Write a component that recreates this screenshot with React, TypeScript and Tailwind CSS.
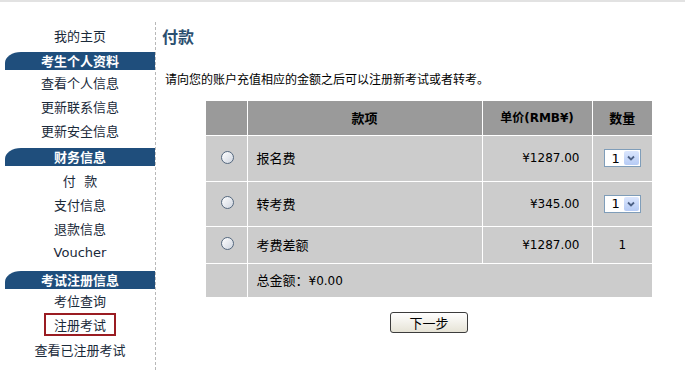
import React from "react";

const cjk = { fontFamily: '"Noto Sans CJK SC", "Noto Sans", sans-serif' };
const num = { fontFamily: '"DejaVu Sans", "Noto Sans CJK SC", sans-serif' };

function Item({ children, h = "h-[24px]", latin = false }: { children: React.ReactNode; h?: string; latin?: boolean }) {
  return (
    <div className={`${h} flex items-center justify-center text-[13px] text-[#1a2a3a]`} style={latin ? num : undefined}>
      {children}
    </div>
  );
}

function Header({ children, mt }: { children: React.ReactNode; mt: string }) {
  return (
    <div className={`${mt} h-[18px] bg-[#1f4e7c] rounded-tl-[16px_11px] flex items-center justify-center text-white font-bold text-[13px]`}>
      {children}
    </div>
  );
}

function Radio() {
  return (
    <span className="inline-block w-[13px] h-[13px] rounded-full border border-[#54677d] bg-gradient-to-br from-white to-[#cfd5df]" />
  );
}

function Select() {
  return (
    <div className="inline-flex w-[37px] h-[18px] border border-[#7f9db9] bg-white items-center">
      <span className="flex-1 pl-[3px] text-[13px] leading-none text-black" style={num}>1</span>
      <span className="w-[15px] h-[14px] mr-[1px] bg-gradient-to-b from-[#dbe6fd] to-[#b6cbf5] rounded-[2px] flex items-center justify-center">
        <svg width="8" height="6" viewBox="0 0 8 6">
          <path d="M1 1.5 L4 4.5 L7 1.5" stroke="#4d6185" strokeWidth="1.8" fill="none" />
        </svg>
      </span>
    </div>
  );
}

export default function App() {
  return (
    <div className="w-[685px] h-[370px] bg-white overflow-hidden" style={cjk}>
      <div className="h-[2px] bg-[#e2e2e2]" />
      <div className="flex mt-[20px]">
        <div className="w-[156px] pl-[5px] border-r border-dashed border-[#b8b8b8] h-[348px]">
          <div className="pt-[2px]">
            <Item>我的主页</Item>
            <Header mt="mt-[4px]">考生个人资料</Header>
            <div className="mt-[1px]">
              <Item>查看个人信息</Item>
              <Item>更新联系信息</Item>
              <Item>更新安全信息</Item>
            </div>
            <Header mt="mt-[5px]">财务信息</Header>
            <div className="mt-[3px]">
              <Item>付&nbsp;&nbsp;&nbsp;款</Item>
              <Item>支付信息</Item>
              <Item>退款信息</Item>
              <Item latin>Voucher</Item>
            </div>
            <Header mt="mt-[6px]">考试注册信息</Header>
            <Item>考位查询</Item>
            <div className="h-[25px] flex items-start justify-center">
              <div className="w-[72px] h-[23px] border-2 border-[#9a1c22] flex items-center justify-center text-[13px] text-[#1a2a3a]">
                注册考试
              </div>
            </div>
            <Item>查看已注册考试</Item>
          </div>
        </div>
        <div className="flex-1 pl-[6px]">
          <div className="h-[28px] flex items-center text-[16px] font-bold text-[#2b4f70]">付款</div>
          <div className="mt-[20px] pl-[3px] h-[18px] flex items-center text-[12px] text-black">
            请向您的账户充值相应的金额之后可以注册新考试或者转考。
          </div>
          <div className="ml-[44px] mt-[13px] w-[446px]">
            <table className="border-collapse w-[446px] text-[12px] text-black table-fixed">
              <colgroup>
                <col className="w-[41px]" />
                <col className="w-[235px]" />
                <col className="w-[110px]" />
                <col className="w-[60px]" />
              </colgroup>
              <thead>
                <tr className="h-[34px] bg-[#9a9a9a]">
                  <th className="border border-white border-t-0 border-l-0"></th>
                  <th className="border border-white border-t-0 font-bold text-[13px]">款项</th>
                  <th className="border border-white border-t-0 font-bold text-[12px]" style={num}>
                    <span style={cjk}>单价</span>(RMB¥)
                  </th>
                  <th className="border border-white border-t-0 border-r-0 font-bold text-[13px]">数量</th>
                </tr>
              </thead>
              <tbody>
                {[
                  { name: "报名费", price: "¥1287.00", sel: true, h: "h-[46px]" },
                  { name: "转考费", price: "¥345.00", sel: true, h: "h-[45px]" },
                  { name: "考费差额", price: "¥1287.00", sel: false, h: "h-[37px]" },
                ].map((r) => (
                  <tr key={r.name} className={`${r.h} bg-[#cccccc]`}>
                    <td className="border border-white border-l-0 text-center pl-[2px]">
                      <span className="inline-flex items-center justify-center pt-[2px]"><Radio /></span>
                    </td>
                    <td className="border border-white pl-[9px] text-[13px]">{r.name}</td>
                    <td className="border border-white text-right pr-[12px]" style={num}>{r.price}</td>
                    <td className="border border-white border-r-0 text-center" style={num}>
                      {r.sel ? <span className="inline-flex pt-[1px]"><Select /></span> : "1"}
                    </td>
                  </tr>
                ))}
                <tr className="h-[34px] bg-[#cccccc]">
                  <td className="border border-white border-l-0 border-b-0"></td>
                  <td colSpan={3} className="border border-white border-r-0 border-b-0 pl-[9px] text-[13px]">
                    总金额：<span style={num} className="text-[12px]">¥0.00</span>
                  </td>
                </tr>
              </tbody>
            </table>
            <div className="flex justify-center mt-[15px]">
              <button className="w-[78px] h-[21px] rounded-[3px] border border-[#3c3c3c] bg-gradient-to-b from-white to-[#e6e3d6] text-[13px] text-black flex items-center justify-center">
                下一步
              </button>
            </div>
          </div>
        </div>
      </div>
    </div>
  );
}
